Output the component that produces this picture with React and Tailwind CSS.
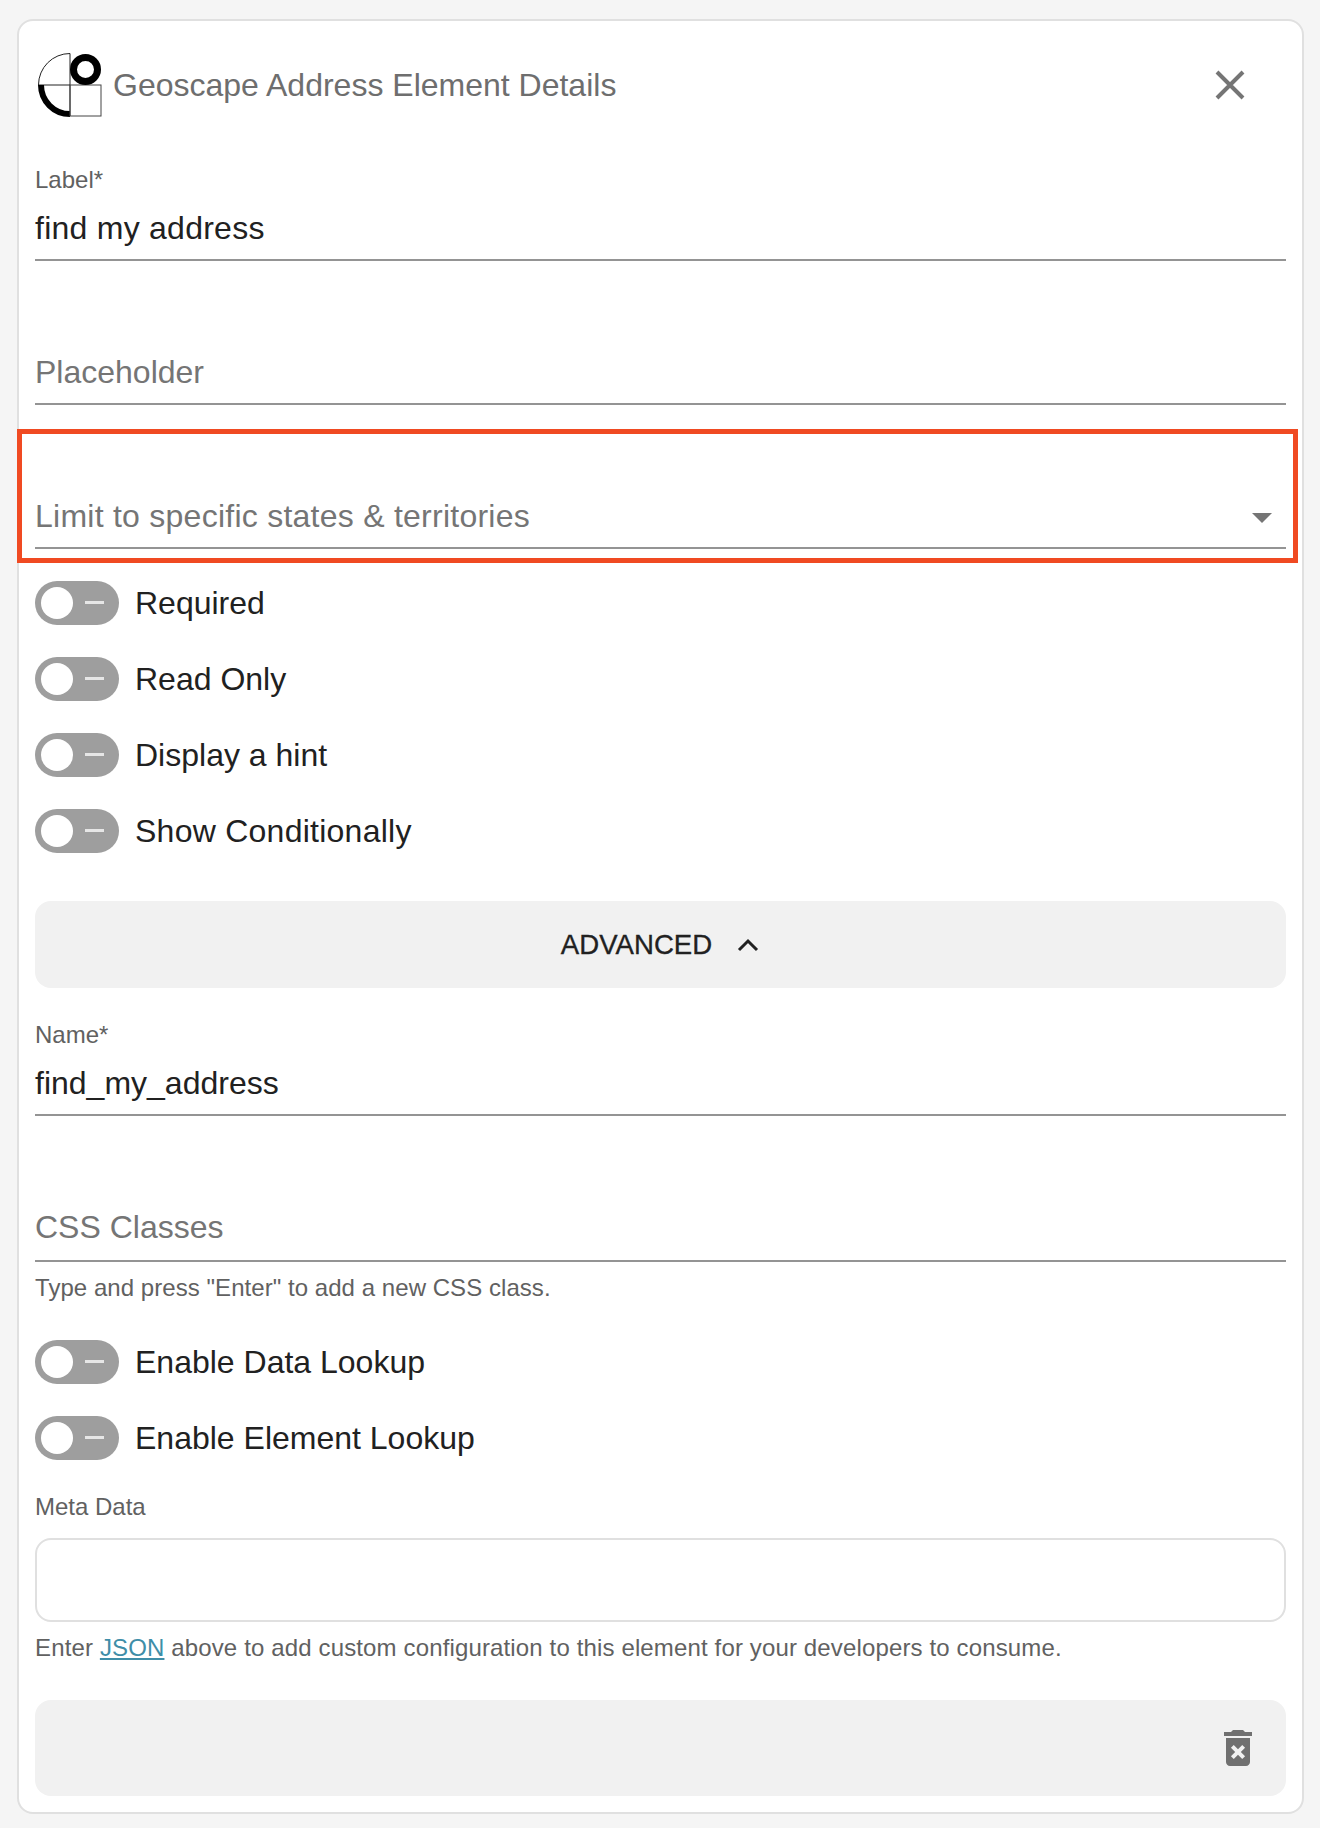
const font = "font-['Liberation_Sans',Arial,sans-serif]";

function Toggle({ label, wide }) {
  return (
    <div className="flex h-[76px] items-center">
      <div className="relative h-[44px] w-[84px] shrink-0 rounded-full bg-[#9e9e9e]">
        <div className="absolute left-[6px] top-[6px] h-[32px] w-[32px] rounded-full bg-white" />
        <div className="absolute left-[50px] top-[20px] h-[3px] w-[19px] bg-[#e6e6e6]" />
      </div>
      <span className={`ml-[16px] text-[32px] leading-[44px] text-[#212121] ${wide ? "tracking-[0.25px]" : ""}`}>{label}</span>
    </div>
  );
}

function Field({ label, value, placeholder, children, height = 144, wide, raised }) {
  return (
    <div className="flex flex-col justify-end" style={{ height }}>
      {label && <div className="mb-[15px] text-[24px] leading-[28px] text-[#616161]">{label}</div>}
      <div className={`relative flex h-[52px] items-center border-b-2 border-[#949494] ${raised ? "pb-[17px]" : "pb-[13px]"}`}>
        <span className={`text-[32px] leading-[40px] ${value ? "text-[#212121]" : "text-[#757575]"} ${wide ? "tracking-[0.25px]" : ""}`}>
          {value || placeholder}
        </span>
        {children}
      </div>
    </div>
  );
}

export default function App() {
  return (
    <div className={`min-h-[1828px] bg-[#f5f5f5] pl-[17px] pr-[16px] pt-[19px] ${font}`}>
      <div className="flex h-[1795px] flex-col rounded-[16px] border-2 border-[#e0e0e0] bg-white px-[16px]">
        <header className="flex h-[128px] items-center">
          <svg width="64" height="64" viewBox="0 0 64 64" className="ml-[3px] shrink-0">
            <path d="M32 .5 A31.5 31.5 0 0 0 .5 32 H32 Z" fill="none" stroke="#222" strokeWidth="1" />
            <path d="M32 32 V63" fill="none" stroke="#222" strokeWidth="1" />
            <path d="M3 32 A29 29 0 0 0 32 61" fill="none" stroke="#000" strokeWidth="6" />
            <rect x="32" y="32" width="31" height="31" fill="none" stroke="#444" strokeWidth="1" />
            <circle cx="47.5" cy="16.5" r="12" fill="#fff" stroke="#000" strokeWidth="7" />
          </svg>
          <h1 className="ml-[11px] text-[32px] font-normal leading-[40px] text-[#6e6e6e]">Geoscape Address Element Details</h1>
          <svg width="48" height="48" viewBox="0 0 48 48" className="ml-auto mr-[32px]">
            <path d="M11 11 L37 37 M37 11 L11 37" stroke="#757575" strokeWidth="4" fill="none" />
          </svg>
        </header>

        <Field label="Label*" value="find my address" height={112} wide />
        <Field placeholder="Placeholder" />

        <div className="relative">
          <Field placeholder="Limit to specific states & territories" wide>
            <svg width="20" height="10" viewBox="0 0 20 10" className="absolute right-[14px] top-[16px]">
              <path d="M0 0 H20 L10 10 Z" fill="#757575" />
            </svg>
          </Field>
          <div className="pointer-events-none absolute -left-[18px] -right-[12px] -bottom-[14px] top-[24px] border-[5px] border-[#f04a22]" />
        </div>

        <div className="mt-[16px]">
          <Toggle label="Required" />
          <Toggle label="Read Only" />
          <Toggle label="Display a hint" />
          <Toggle label="Show Conditionally" wide />
        </div>

        <button className="mt-[32px] flex h-[87px] shrink-0 items-center justify-center rounded-[16px] bg-[#f1f1f1] text-[27.6px] text-[#212121] [-webkit-text-stroke:0.3px_#212121]">
          ADVANCED
          <svg width="24" height="16" viewBox="0 0 24 16" className="ml-[24px]">
            <path d="M3 13 L12 4 L21 13" fill="none" stroke="#212121" strokeWidth="3" />
          </svg>
        </button>

        <Field label="Name*" value="find_my_address" height={128} />
        <Field placeholder="CSS Classes" height={146} raised />
        <p className="mt-[12px] text-[24px] leading-[28px] tracking-[0.05px] text-[#616161]">Type and press "Enter" to add a new CSS class.</p>

        <div className="mt-[22px]">
          <Toggle label="Enable Data Lookup" />
          <Toggle label="Enable Element Lookup" />
        </div>

        <div className="mt-[17px] text-[24px] leading-[28px] text-[#616161]">Meta Data</div>
        <div className="mt-[17px] h-[84px] shrink-0 rounded-[16px] border-2 border-[#e0e0e0]" />
        <p className="mt-[12px] text-[24px] leading-[28px] tracking-[0.14px] text-[#616161]">
          Enter <a className="text-[#3f8ea8] underline">JSON</a> above to add custom configuration to this element for your developers to consume.
        </p>

        <div className="mt-[38px] flex h-[96px] shrink-0 items-center justify-end rounded-[16px] bg-[#f1f1f1] pr-[24px]">
          <svg width="48" height="48" viewBox="0 0 24 24" fill="#707070">
            <path d="M6 19c0 1.1.9 2 2 2h8c1.1 0 2-.9 2-2V7H6v12zm2.46-7.12l1.41-1.41L12 12.59l2.12-2.12 1.41 1.41L13.41 14l2.12 2.12-1.41 1.41L12 15.41l-2.12 2.12-1.41-1.41L10.59 14l-2.13-2.12zM15.5 4l-1-1h-5l-1 1H5v2h14V4z" />
          </svg>
        </div>
      </div>
    </div>
  );
}
